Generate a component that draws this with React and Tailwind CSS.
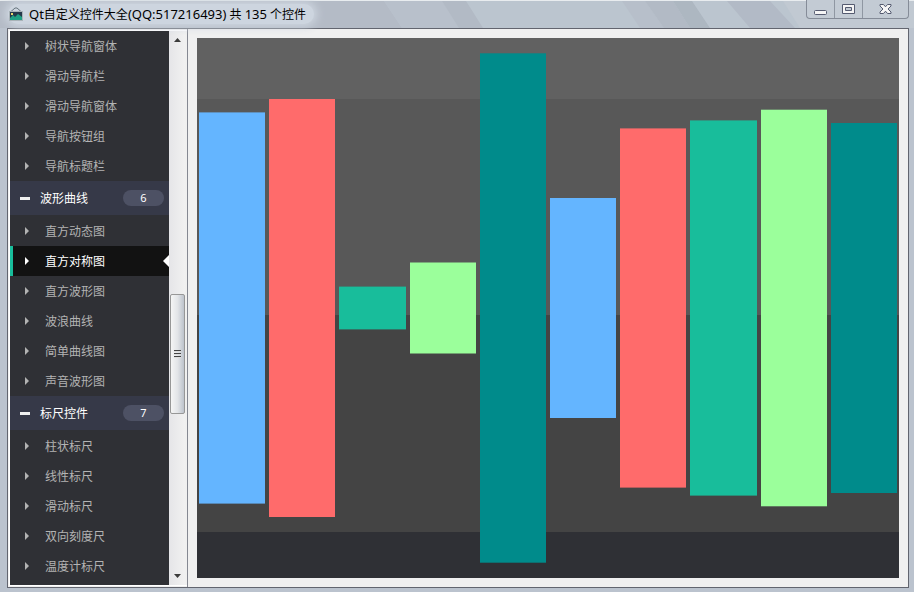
import React from "react";

const rows = [
  { text: "树状导航窗体" },
  { text: "滑动导航栏" },
  { text: "滑动导航窗体" },
  { text: "导航按钮组" },
  { text: "导航标题栏" },
  { text: "波形曲线", count: 6 },
  { text: "直方动态图" },
  { text: "直方对称图", selected: true },
  { text: "直方波形图" },
  { text: "波浪曲线" },
  { text: "简单曲线图" },
  { text: "声音波形图" },
  { text: "标尺控件", count: 7 },
  { text: "柱状标尺" },
  { text: "线性标尺" },
  { text: "滑动标尺" },
  { text: "双向刻度尺" },
  { text: "温度计标尺" },
];

const bars = [
  { x: 2, w: 66, y: 74.4, h: 391.2, fill: "#64b5ff" },
  { x: 72, w: 66, y: 61, h: 418, fill: "#ff6b6b" },
  { x: 142, w: 67, y: 248.6, h: 42.8, fill: "#18bd9b" },
  { x: 213, w: 66, y: 224.5, h: 91, fill: "#9bff9b" },
  { x: 283, w: 66, y: 15.3, h: 509.4, fill: "#008b8b" },
  { x: 353, w: 66, y: 160, h: 220, fill: "#64b5ff" },
  { x: 423, w: 66, y: 90.4, h: 359.2, fill: "#ff6b6b" },
  { x: 493, w: 67, y: 82.4, h: 375.2, fill: "#18bd9b" },
  { x: 564, w: 66, y: 71.7, h: 396.6, fill: "#9bff9b" },
  { x: 634, w: 66, y: 85, h: 370, fill: "#008b8b" },
];

function AppIcon() {
  return (
    <svg width="14" height="14" viewBox="0 0 14 14" aria-hidden="true">
      <path d="M2 4.500L6 1H8L12 4.500" fill="none" stroke="#66747d" />
      <rect x="0" y="4" width="14" height="10" fill="#a9b3b8" />
      <rect x="1" y="5" width="12" height="8" fill="#25384a" />
      <path d="M1 11L4 8L6 10L9 7L13 10V13H1Z" fill="#20a184" />
      <rect x="2" y="6" width="2" height="2" fill="#e9d76d" />
    </svg>
  );
}

function TitleBar() {
  return (
    <header className="relative flex h-7 shrink-0 items-start justify-between border-t border-[#e8ecef]">
      <svg className="absolute inset-0 -z-10 h-full w-full" viewBox="0 0 914 27" preserveAspectRatio="none" aria-hidden="true">
        <rect width="914" height="27" fill="#bbc5cf" />
        <path d="M0 0H384L402 27H0Z" fill="#b4bbc6" />
        <path d="M384 0H442L460 27H402Z" fill="#b8c0cb" />
        <path d="M442 0H466L483 27H459Z" fill="#b2bac5" />
        <path d="M622 0H645L664 27H640Z" fill="#b7bfca" />
        <path d="M645 0H673L690 27H664Z" fill="#b2bac5" />
        <path d="M673 0H692L710 27H690Z" fill="#adb7c1" />
        <path d="M727 0H770L795 27H750Z" fill="#b2bac6" />
        <path d="M783 0H914V27H800Z" fill="#c1c9d2" />
      </svg>
      <div className="ml-2 mt-[3px] flex h-5 items-center gap-1.5 rounded-full bg-[#cdd5df] pr-2 pl-px shadow-[0_0_8px_3px_#cdd5df]">
        <AppIcon />
        <h1 className="whitespace-nowrap leading-5 text-black">
          <span className="text-[13px]">Qt</span>自定义控件大全<span className="text-[13px]">(QQ:517216493)</span> 共 <span className="text-[13px]">135</span> 个控件
        </h1>
      </div>
      <div className="-mt-px mr-[5px] flex h-[19px] overflow-hidden rounded-b border border-t-0 border-[#858c98] bg-[#c3cbd4]">
        <button aria-label="最小化" className="flex w-7 items-center justify-center border-r border-[#8f97a2]">
          <svg width="13" height="13" viewBox="0 0 13 13"><rect x=".5" y="7.5" width="12" height="4" rx="1" fill="#f5f5f5" stroke="#555b70" /></svg>
        </button>
        <button aria-label="最大化" className="flex w-7 items-center justify-center border-r border-[#8f97a2]">
          <svg width="13" height="11" viewBox="0 0 13 11"><path d="M.5.5H12.500V9.500H.5Z M3.500 3.500V6.500H9.500V3.500Z" fill="#f5f5f5" fillRule="evenodd" stroke="#555b70" /></svg>
        </button>
        <button aria-label="关闭" className="flex w-[45px] items-center justify-center">
          <svg width="13" height="11" viewBox="0 0 13 11"><path d="M1 .5H4.500L6.500 2.800L8.500 .5H12V2L9 5L12 8V9.500H8.500L6.500 7.200L4.500 9.500H1V8L4 5L1 2Z" fill="#f5f5f5" stroke="#555b70" /></svg>
        </button>
      </div>
    </header>
  );
}

function GroupRow({ row }) {
  return (
    <li>
      <button className="flex h-[35px] w-full items-center border-b border-[#2f3035] bg-[#363948] pl-2.5 pr-[5px] text-left text-white">
        <span className="h-[3px] w-2.5 bg-[#f0f0f0]" />
        <span className="ml-2.5 flex-1 pt-0.5">{row.text}</span>
        <span className="h-4 w-[41px] rounded-full bg-[#4d5164] text-center text-[11px] leading-4">{row.count}</span>
      </button>
    </li>
  );
}

function ItemRow({ row }) {
  return (
    <li>
      <button
        className={
          row.selected
            ? "relative flex h-[30px] w-full items-center border-l-[3px] border-[#18bd9b] bg-[#121212] pl-3 text-left text-white"
            : "relative flex h-[30px] w-full items-center border-l-[3px] border-[#2f3035] bg-[#2f3035] pl-3 text-left text-[#b3b3b3]"
        }
      >
        <svg width="4" height="8" viewBox="0 0 4 8" aria-hidden="true"><path d="M0 0L4 4L0 8Z" fill="currentColor" /></svg>
        <span className="ml-4 pt-0.5">{row.text}</span>
        {row.selected && (
          <svg className="absolute right-0" width="6" height="12" viewBox="0 0 6 12" aria-hidden="true"><path d="M6 0L0 6L6 12Z" fill="#fff" /></svg>
        )}
      </button>
    </li>
  );
}

function ScrollBar() {
  return (
    <div className="flex w-[18px] shrink-0 flex-col items-start bg-[#f0f0f0]" aria-hidden="true">
      <div className="flex w-4 flex-1 flex-col items-center bg-linear-to-r from-[#e5e5e8] to-[#f1f1f1]">
        <svg className="mt-[7px] shrink-0" width="7" height="4" viewBox="0 0 7 4"><path d="M0 4L3.500 0L7 4Z" fill="#3b3b3b" /></svg>
        <div className="grow-[253]" />
        <div className="flex h-[120px] w-[15px] flex-col items-center justify-center gap-px rounded-xs border border-[#979797] bg-linear-to-r from-[#f5f5f5] via-[#e3e5e8] to-[#bdc3cc]">
          <span className="h-0.5 w-[7px] border-t border-[#444] bg-[#ddd]" />
          <span className="h-0.5 w-[7px] border-t border-[#444] bg-[#ddd]" />
          <span className="h-0.5 w-[7px] border-t border-[#444] bg-[#ddd]" />
        </div>
        <div className="grow-[161]" />
        <svg className="mb-[7px] shrink-0" width="7" height="4" viewBox="0 0 7 4"><path d="M0 0H7L3.500 4Z" fill="#3b3b3b" /></svg>
      </div>
    </div>
  );
}

function SymmetricBars() {
  return (
    <svg className="h-full w-full" viewBox="0 0 702 540" preserveAspectRatio="none" role="img" aria-label="直方对称图">
      <rect width="702" height="61" fill="#616161" />
      <rect y="61" width="702" height="216" fill="#585858" />
      <rect y="277" width="702" height="217" fill="#444444" />
      <rect y="494" width="702" height="46" fill="#2f3035" />
      {bars.map((b) => (
        <rect key={b.x} x={b.x} y={b.y} width={b.w} height={b.h} fill={b.fill} />
      ))}
    </svg>
  );
}

export default function App() {
  return (
    <div className="isolate flex h-screen flex-col overflow-hidden bg-[#bbc3ce] font-['Noto_Sans','Noto_Sans_CJK_SC',sans-serif] text-[12px]">
      <TitleBar />
      <main className="mx-[5px] mb-1 ml-[7px] flex min-h-0 flex-1 border border-[#62656f] bg-[#f0f0f0]">
        <nav className="flex w-[180px] shrink-0 border-r border-[#858892] pt-px pl-px" aria-label="控件">
          <div className="mb-px flex min-w-0 flex-1 border-y border-l border-white">
            <ul className="min-w-0 flex-1 overflow-hidden bg-[#2f3035]">
              {rows.map((row, i) => (row.count ? <GroupRow key={i} row={row} /> : <ItemRow key={i} row={row} />))}
            </ul>
            <ScrollBar />
          </div>
        </nav>
        <section className="min-w-0 flex-1 p-[9px]">
          <SymmetricBars />
        </section>
      </main>
    </div>
  );
}
